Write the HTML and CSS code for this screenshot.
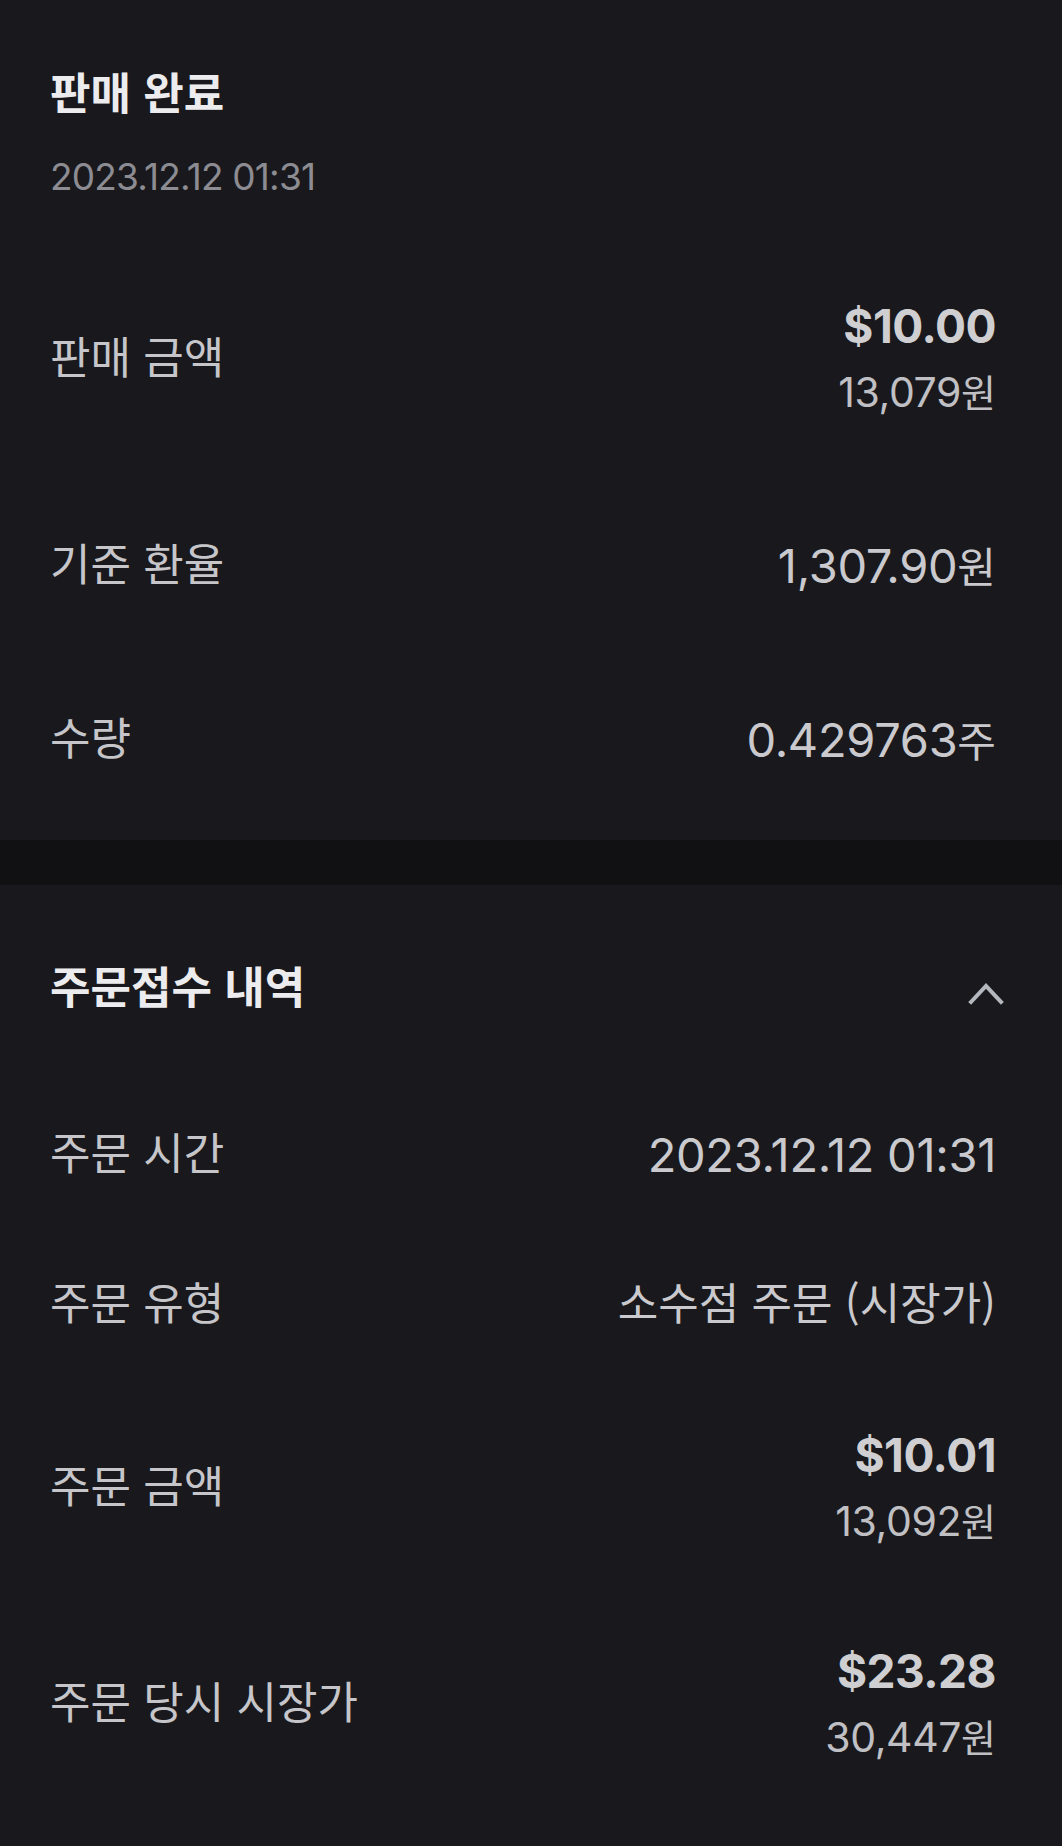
FILE: index.html
```html
<!DOCTYPE html>
<html lang="ko">
<head>
    <meta charset="UTF-8">
    <meta name="viewport" content="width=device-width, initial-scale=1.0">
    <title>판매 완료</title>
    <link rel="stylesheet" href="styles.css">
</head>
<body>
    <section class="summary">
        <div class="summary-head">
            <h1 class="title">판매 완료</h1>
            <div class="date">2023.12.12 01:31</div>
        </div>

        <div class="rows">
            <div class="row">
                <div class="label">판매 금액</div>
                <div class="value">
                    <div class="amount">$10.00</div>
                    <div class="sub">13,079<span class="unit">원</span></div>
                </div>
            </div>
            <div class="row">
                <div class="label">기준 환율</div>
                <div class="value">1,307.90<span class="unit">원</span></div>
            </div>
            <div class="row">
                <div class="label">수량</div>
                <div class="value">0.429763<span class="unit">주</span></div>
            </div>
        </div>
    </section>

    <div class="divider"></div>

    <section class="order">
        <div class="order-head">
            <h2 class="title">주문접수 내역</h2>
            <svg class="chevron" width="36" height="22" viewBox="0 0 36 22">
                <polyline points="3,19 18,3 33,19" fill="none" stroke="#b4b7bd" stroke-width="4" stroke-linecap="square" stroke-linejoin="miter"/>
            </svg>
        </div>

        <div class="rows">
            <div class="row">
                <div class="label">주문 시간</div>
                <div class="value">2023.12.12 01:31</div>
            </div>
            <div class="row">
                <div class="label">주문 유형</div>
                <div class="value text">소수점 주문 (시장가)</div>
            </div>
            <div class="row">
                <div class="label">주문 금액</div>
                <div class="value">
                    <div class="amount">$10.01</div>
                    <div class="sub">13,092<span class="unit">원</span></div>
                </div>
            </div>
            <div class="row">
                <div class="label">주문 당시 시장가</div>
                <div class="value">
                    <div class="amount">$23.28</div>
                    <div class="sub">30,447<span class="unit">원</span></div>
                </div>
            </div>
        </div>
    </section>
</body>
</html>
```

FILE: styles.css
```css
body {
    margin: 0;
    background: #19191d;
    font-family: "Noto Sans CJK KR", sans-serif;
    color: #c6c6ca;
}
section {
    padding: 0 66px 0 50px;
}
.title {
    margin: 0;
    font-size: 44px;
    font-weight: 700;
    line-height: 56px;
    color: #ececee;
}
.summary {
    padding-top: 63px;
    padding-bottom: 13px;
}
.date {
    margin-top: 34px;
    font-family: Inter, sans-serif;
    font-size: 37px;
    line-height: 48px;
    letter-spacing: -0.8px;
    color: #8c8c92;
}
.summary .rows {
    margin-top: 38px;
}
.row {
    display: flex;
    justify-content: space-between;
    align-items: center;
    padding: 54px 0;
}
.order .row {
    padding: 42px 0;
}
.label {
    font-size: 44px;
    line-height: 59px;
    padding-bottom: 7px;
    color: #c6c6ca;
}
.value {
    text-align: right;
    font-family: Inter, "Noto Sans CJK KR", sans-serif;
    font-size: 47px;
    line-height: 66px;
    letter-spacing: -0.3px;
    color: #cacace;
}
.value.text {
    font-family: "Noto Sans CJK KR", sans-serif;
    font-size: 44px;
    line-height: 59px;
    letter-spacing: 0;
    padding-bottom: 7px;
}
.unit {
    font-family: "Noto Sans CJK KR", sans-serif;
    font-size: 42px;
    line-height: 56px;
    letter-spacing: 0;
}
.amount {
    font-size: 46px;
    font-weight: 700;
    letter-spacing: -0.5px;
    color: #cfcfd2;
}
.sub {
    font-size: 41px;
    letter-spacing: -0.4px;
    color: #c0c0c4;
}
.sub .unit {
    font-size: 38px;
}
.divider {
    height: 45px;
    background: #111113;
}
.order {
    padding-top: 69px;
}
.order-head {
    display: flex;
    justify-content: space-between;
    align-items: center;
    height: 66px;
    margin-bottom: 60px;
}
.order-head .title {
    padding-bottom: 4px;
}
.chevron {
    margin-right: -8px;
    margin-top: 13px;
}
```
